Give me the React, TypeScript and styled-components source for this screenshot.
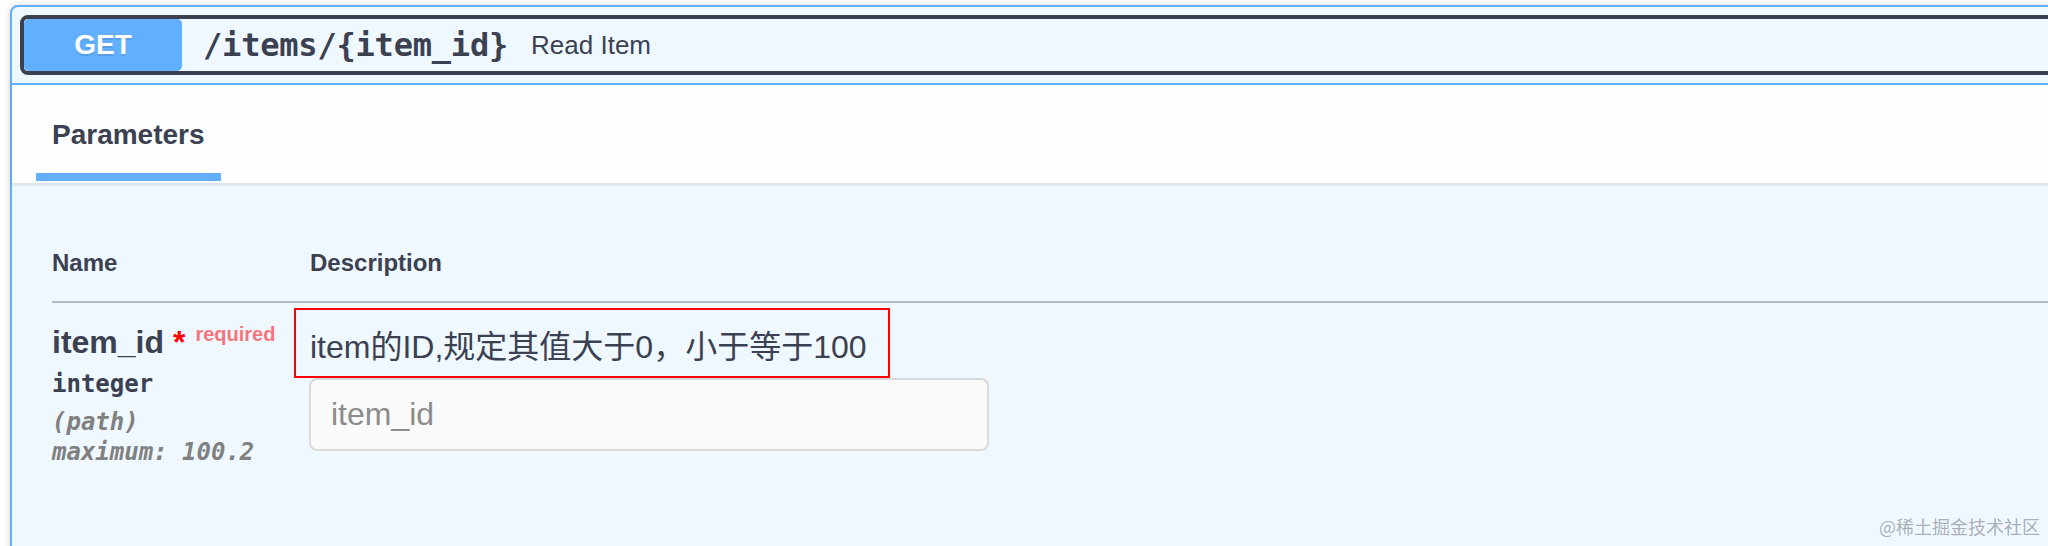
import React from "react";
import styled, { createGlobalStyle } from "styled-components";

const GlobalStyle = createGlobalStyle`
  html, body {
    margin: 0;
    padding: 0;
    background: #ffffff;
    overflow: hidden;
  }
  body {
    font-family: "Liberation Sans", Arial, "Noto Sans CJK SC", sans-serif;
    color: #3b4151;
  }
`;

const Page = styled.div`
  position: relative;
  width: 2048px;
  height: 546px;
  overflow: hidden;
  padding: 5px 0 0 10px;
  box-sizing: border-box;
`;

const Opblock = styled.div`
  width: calc(100% + 40px);
  min-height: 620px;
  border: 2px solid #61affe;
  border-radius: 8px;
  background: #eff7ff;
  box-shadow: 0 0 6px rgba(0, 0, 0, 0.19);
  box-sizing: border-box;
`;

const Summary = styled.div`
  padding: 8px;
  border-bottom: 2px solid #61affe;
`;

const SummaryControl = styled.div`
  display: flex;
  align-items: center;
  height: 60px;
  box-sizing: border-box;
  border: 4px solid #3b4151;
  border-radius: 8px;
`;

const Method = styled.div`
  width: 158px;
  height: 100%;
  display: flex;
  align-items: center;
  justify-content: center;
  background: #61affe;
  border-radius: 5px;
  color: #ffffff;
  font-size: 28px;
  font-weight: 700;
  text-shadow: 0 2px 0 rgba(0, 0, 0, 0.1);
`;

const Path = styled.span`
  margin-left: 21px;
  font-family: "DejaVu Sans Mono", "Liberation Mono", monospace;
  font-weight: 700;
  font-size: 32px;
  letter-spacing: -0.2px;
  color: #3b4151;
`;

const SummaryDesc = styled.span`
  margin-left: 23px;
  font-size: 26px;
  color: #3b4151;
`;

const SectionHeader = styled.div`
  position: relative;
  display: flex;
  padding: 30px 24px 2px;
  background: rgba(255, 255, 255, 0.8);
  box-shadow: 0 2px 3px rgba(0, 0, 0, 0.1);
`;

const Tab = styled.div<{ $active?: boolean }>`
  padding: 0 16px 18px;
  line-height: 40px;
  font-size: 28px;
  font-weight: 700;
  color: #3b4151;
  border-bottom: 8px solid ${(p) => (p.$active ? "#61affe" : "transparent")};
`;

const ParamsBody = styled.div`
  padding: 65px 0 0 40px;
`;

const HeadRow = styled.div`
  display: flex;
  padding-bottom: 23px;
  border-bottom: 2px solid #b4bac4;
  line-height: 30px;
`;

const HeadCell = styled.div<{ $width?: number }>`
  width: ${(p) => (p.$width ? `${p.$width}px` : "auto")};
  font-size: 24px;
  font-weight: 700;
  color: #3b4151;
`;

const ParamRow = styled.div`
  display: flex;
  align-items: flex-start;
`;

const NameCell = styled.div`
  width: 258px;
  padding-top: 20px;
  flex-shrink: 0;
`;

const ParamName = styled.div`
  font-size: 32px;
  font-weight: 700;
  line-height: 38px;
  color: #3b4151;
  white-space: nowrap;
`;

const Star = styled.span`
  color: #ff0000;
`;

const Required = styled.span`
  position: relative;
  top: -12px;
  padding-left: 10px;
  font-size: 20px;
  font-weight: 700;
  color: rgba(255, 0, 0, 0.55);
`;

const ParamType = styled.div`
  margin-top: 5px;
  line-height: 28px;
  font-family: "DejaVu Sans Mono", "Liberation Mono", monospace;
  font-size: 24px;
  font-weight: 700;
  color: #3b4151;
`;

const ParamMeta = styled.div<{ $gap?: number }>`
  margin-top: ${(p) => p.$gap ?? 0}px;
  line-height: 30px;
  font-family: "DejaVu Sans Mono", "Liberation Mono", monospace;
  font-size: 24px;
  font-style: italic;
  font-weight: 700;
  color: #808080;
  white-space: nowrap;
`;

const DescCell = styled.div`
  display: flex;
  flex-direction: column;
  align-items: flex-start;
  padding-top: 5px;
`;

const Highlight = styled.div`
  margin-left: -16px;
  padding: 17px 21px 9px 14px;
  border: 2px solid #ff0000;
`;

const DescText = styled.p`
  margin: 0;
  line-height: 40px;
  font-size: 32px;
  color: #3b4151;
  white-space: nowrap;
`;

const TextInput = styled.input`
  width: 680px;
  height: 73px;
  margin-left: -1px;
  box-sizing: border-box;
  padding: 0 20px;
  border: 2px solid #d9d9d9;
  border-radius: 8px;
  background: #fafafa;
  font-family: "Liberation Sans", Arial, sans-serif;
  font-size: 32px;
  color: #3b4151;
  outline: none;

  &::placeholder {
    color: #8c8c8c;
  }
`;

const Watermark = styled.div`
  position: absolute;
  right: 8px;
  bottom: 7px;
  font-family: "Noto Sans CJK SC", "Liberation Sans", sans-serif;
  font-size: 18px;
  color: rgba(60, 60, 60, 0.4);
`;

const App = () => {
  return (
    <>
      <GlobalStyle />
      <Page>
        <Opblock>
          <Summary>
            <SummaryControl>
              <Method>GET</Method>
              <Path>/items/{"{item_id}"}</Path>
              <SummaryDesc>Read Item</SummaryDesc>
            </SummaryControl>
          </Summary>
          <SectionHeader>
            <Tab $active>Parameters</Tab>
          </SectionHeader>
          <ParamsBody>
            <HeadRow>
              <HeadCell $width={258}>Name</HeadCell>
              <HeadCell>Description</HeadCell>
            </HeadRow>
            <ParamRow>
              <NameCell>
                <ParamName>
                  item_id <Star>*</Star>
                  <Required>required</Required>
                </ParamName>
                <ParamType>integer</ParamType>
                <ParamMeta $gap={9}>(path)</ParamMeta>
                <ParamMeta>maximum: 100.2</ParamMeta>
              </NameCell>
              <DescCell>
                <Highlight>
                  <DescText>item的ID,规定其值大于0，小于等于100</DescText>
                </Highlight>
                <TextInput placeholder="item_id" />
              </DescCell>
            </ParamRow>
          </ParamsBody>
        </Opblock>
        <Watermark>@稀土掘金技术社区</Watermark>
      </Page>
    </>
  );
};

export default App;
